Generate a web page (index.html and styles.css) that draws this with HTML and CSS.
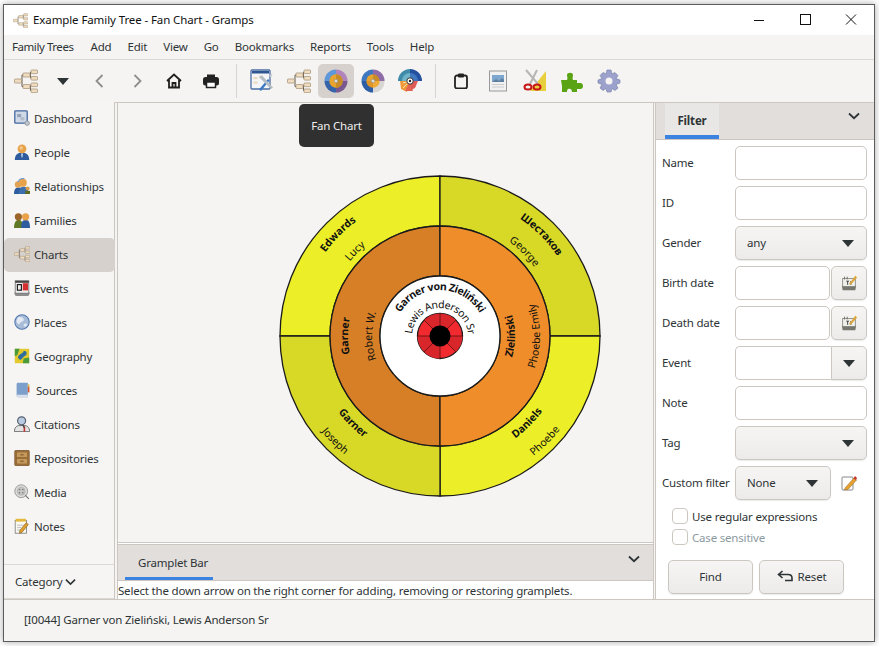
FILE: index.html
```html
<!DOCTYPE html>
<html lang="en">
<head>
<meta charset="utf-8">
<title>Example Family Tree - Fan Chart - Gramps</title>
<link rel="stylesheet" href="styles.css">
</head>
<body>
<svg class="defs" width="0" height="0" aria-hidden="true">
  <defs>
    <symbol id="tree" viewBox="0 0 24 24">
      <path d="M7 12H8M8 6V17.500M8 6H9M8 17.500H9M16 6H16.500M16 17.500H16.500M16.500 2.800V9.300M16.500 15.800V21.800" fill="none" stroke="#5f584e" stroke-width="1"/>
      <g fill="#f0dcbe" stroke="#a9987e" stroke-width=".8">
        <rect x=".5" y="10" width="7" height="4" rx=".6"/>
        <rect x="9" y="4" width="7" height="4" rx=".6"/>
        <rect x="9" y="15.500" width="7" height="4" rx=".6"/>
        <rect x="17" y="1" width="6.500" height="3.600" rx=".6"/>
        <rect x="17" y="7.500" width="6.500" height="3.600" rx=".6"/>
        <rect x="17" y="14" width="6.500" height="3.600" rx=".6"/>
        <rect x="17" y="20" width="6.500" height="3.600" rx=".6"/>
      </g>
    </symbol>
    <symbol id="fan1" viewBox="0 0 24 24">
      <path d="M12 12V.5A11.500 11.500 0 0 0 .5 12Z" fill="#5f98d8"/>
      <path d="M12 12V.5A11.500 11.500 0 0 1 23.500 12Z" fill="#b085bd"/>
      <path d="M12 12H23.500A11.500 11.500 0 0 1 12 23.500Z" fill="#78588f"/>
      <path d="M12 12V23.500A11.500 11.500 0 0 1 .5 12Z" fill="#3564aa"/>
      <circle cx="12" cy="12" r="6.700" fill="#e8a42d"/>
      <path d="M12 5.300A6.700 6.700 0 0 1 12 18.700Z" fill="#c98c27"/>
      <circle cx="12" cy="12" r="1.800" fill="#dcdcdc" stroke="#888" stroke-width=".5"/>
    </symbol>
    <symbol id="fan2" viewBox="0 0 24 24">
      <circle cx="13" cy="13" r="10.500" fill="#d8d6d3"/>
      <path d="M12 12V.5A11.500 11.500 0 0 0 .5 12Z" fill="#3f78c0"/>
      <path d="M12 12V.5A11.500 11.500 0 0 1 23.500 12Z" fill="#8f6ba8"/>
      <path d="M12 12V23.500A11.500 11.500 0 0 1 .5 12Z" fill="#2e5ea6"/>
      <path d="M12 12V5.300A6.700 6.700 0 0 0 5.300 12Z" fill="#e8a42d"/>
      <path d="M12 12V5.300A6.700 6.700 0 0 1 18.700 12Z" fill="#c98c27"/>
      <path d="M12 12H5.300A6.700 6.700 0 0 0 12 18.700Z" fill="#dc9526"/>
      <path d="M12 12V18.700A6.700 6.700 0 0 0 18.700 12Z" fill="#f0ac36"/>
      <circle cx="12" cy="12" r="1.800" fill="#dcdcdc" stroke="#888" stroke-width=".5"/>
    </symbol>
    <symbol id="fan3" viewBox="0 0 24 24">
      <path d="M0 12A12 12 0 0 1 12 0V12Z" fill="#3f8aa8"/>
      <path d="M12 0A12 12 0 0 1 24 12H12Z" fill="#23509f"/>
      <path d="M4 12A8 8 0 0 1 12 4V12Z" fill="#6db4c8"/>
      <path d="M12 4A8 8 0 0 1 20 12H12Z" fill="#3f78c0"/>
      <path d="M12 12L2 12L3 20L9 23Z" fill="#ee9a3a"/>
      <path d="M12 12L7 22L15 22Z" fill="#e4654f"/>
      <path d="M12 12H20L17 19L13 21Z" fill="#dd5c55"/>
      <path d="M12 12L5 14M12 12L5 19" stroke="#fbe3a6" stroke-width="1"/>
      <circle cx="12" cy="12" r="3.200" fill="#fff" stroke="#333" stroke-width="1"/>
      <circle cx="12" cy="12" r="1.200" fill="#222"/>
    </symbol>
    <symbol id="editor" viewBox="0 0 24 24">
      <rect x="1" y="1" width="19" height="19" rx="1" fill="#f3f5f8" stroke="#4b6da3" stroke-width="1.300"/>
      <rect x="2" y="2" width="17" height="2.500" fill="#2e558f"/>
      <rect x="3.500" y="8" width="4" height="2.200" fill="#ecd9bf"/>
      <rect x="3.500" y="12.500" width="4" height="2.200" fill="#ecd9bf"/>
      <rect x="9" y="6.500" width="4" height="2.200" fill="#ecd9bf"/>
      <path d="M9 20.500L18 10L19.500 11.500L11 22Z" fill="#3a78c2"/>
      <path d="M9 8L21 20L23 18.500L12 6.500Z" fill="#b4bcc4"/>
      <path d="M19 6L22.500 4.500L21 9Z" fill="#c4ccd4"/>
    </symbol>
    <symbol id="dash" viewBox="0 0 20 20">
      <rect x="1" y="1" width="15.500" height="15.500" rx="1" fill="#cfd9e8" stroke="#41689f" stroke-width="1.600"/>
      <rect x="4" y="5" width="5" height="4" fill="#96a3b6"/>
      <rect x="8" y="9" width="5" height="4" fill="#b3bdca"/>
      <circle cx="16.500" cy="16.500" r="2.800" fill="#c0c6cc" stroke="#8b939c" stroke-width="1"/>
    </symbol>
    <symbol id="person" viewBox="0 0 20 20">
      <path d="M1 20C1 13 5 11 10 11S19 13 19 20Z" fill="#2f5c9e"/>
      <path d="M9 12H11L10.500 17H9.500Z" fill="#e7eef6"/>
      <circle cx="10" cy="6" r="5.500" fill="#e8a24a"/>
      <circle cx="9" cy="5" r="2.200" fill="#f3c68a"/>
    </symbol>
    <symbol id="rel" viewBox="0 0 20 20">
      <path d="M0 20C0 14 2 12 6 12S11 14 11 20Z" fill="#2f5c9e"/>
      <circle cx="5" cy="8" r="4" fill="#e2a352"/>
      <path d="M6 20C6 13 9 11 12 11S18 13 18 20Z" fill="#3d6eae"/>
      <circle cx="11" cy="6" r="5" fill="#e8a24a"/>
      <path d="M14 16H20V20H14Z" fill="#5c6a23"/>
      <circle cx="17" cy="13" r="2.500" fill="#d39a4d"/>
      <path d="M5 5A7 7 0 0 1 13 .8" fill="none" stroke="#6b9ad6" stroke-width="1.400"/>
    </symbol>
    <symbol id="family" viewBox="0 0 20 20">
      <path d="M0 20C0 12 3 10 6 10S11 12 11 20Z" fill="#5e7a26"/>
      <circle cx="5.500" cy="6" r="4.500" fill="#9c6428"/>
      <path d="M9 20C9 12 11 10 14.500 10S20 12 20 20Z" fill="#2f5c9e"/>
      <circle cx="14.500" cy="6" r="4.500" fill="#e8a24a"/>
    </symbol>
    <symbol id="cal" viewBox="0 0 20 20">
      <path d="M0 16H20L18 20H2Z" fill="#8e8e8e"/>
      <rect x="1.500" y="1" width="17" height="15.500" fill="#efefef" stroke="#6d6d6d" stroke-width="1"/>
      <rect x="1.500" y="1" width="17" height="2.500" fill="#444"/>
      <rect x="11" y="4" width="6.500" height="9" fill="#d43030"/>
      <rect x="3.500" y="5" width="6.500" height="8.500" fill="#222"/>
      <rect x="5" y="6.500" width="3.500" height="5.500" fill="#eee"/>
    </symbol>
    <symbol id="globe" viewBox="0 0 20 20">
      <circle cx="10" cy="10" r="9" fill="#a8bcd8" stroke="#5078b0" stroke-width="1.300"/>
      <path d="M5 4C9 3 13 5 12 8C11 10 8 9 7 12C6 14 4 11 3 9Z" fill="#e4eaf3"/>
      <path d="M12 13C14 11 17 12 16 14C15 16 12 17 12 13Z" fill="#e4eaf3"/>
    </symbol>
    <symbol id="map" viewBox="0 0 20 20">
      <rect x="1" y="1" width="18" height="18" fill="#e2c92e"/>
      <path d="M1 1H7L4 9L1 10ZM12 13L19 12V19H11Z" fill="#4a9a3c"/>
      <path d="M5 11C8 6 10 8 12 4C15 3 17 6 15 9C12 10 11 13 8 15C6 14 5 13 5 11Z" fill="#2f6f9f"/>
    </symbol>
    <symbol id="book" viewBox="0 0 20 20">
      <path d="M2 3C2 1.500 3 1 4 1H16V19H4C3 19 2 18.500 2 17Z" fill="#7c9fcc"/>
      <path d="M2 17C2 16 3 16 4 16H16V19H4C3 19 2 18.500 2 17Z" fill="#d9dfe8"/>
      <rect x="16" y="6" width="2" height="7" fill="#d6502e"/>
      <rect x="16" y="3" width="2" height="3.500" fill="#d8b33c"/>
    </symbol>
    <symbol id="cite" viewBox="0 0 20 20">
      <path d="M.5 19.500C.5 14 4 12 6 12L14 12C16 12 19.500 14 19.500 19.500Z" fill="#e4e4e4" stroke="#555" stroke-width="1"/>
      <path d="M13 13V19.500" stroke="#c83030" stroke-width="2"/>
      <circle cx="9.500" cy="6" r="5" fill="#b9cbe2" stroke="#55606e" stroke-width="1.500"/>
      <path d="M11 11L13 15" stroke="#444" stroke-width="1.500"/>
    </symbol>
    <symbol id="repo" viewBox="0 0 20 20">
      <rect x="1" y=".5" width="18" height="19" rx="1" fill="#a8763c" stroke="#6d4a22" stroke-width="1"/>
      <rect x="3" y="2.500" width="14" height="7" fill="#c7985c" stroke="#7d5728" stroke-width=".7"/>
      <rect x="3" y="10.500" width="14" height="7" fill="#c7985c" stroke="#7d5728" stroke-width=".7"/>
      <path d="M8 6H12M8 14H12" stroke="#5c3e1a" stroke-width="1"/>
    </symbol>
    <symbol id="media" viewBox="0 0 20 20">
      <circle cx="9" cy="9" r="8" fill="#dcdcda" stroke="#8a8a88" stroke-width="1"/>
      <circle cx="9" cy="9" r="5" fill="#c6c6c3" stroke="#9c9c9a" stroke-width=".6"/>
      <g fill="#777"><circle cx="7" cy="7" r="1"/><circle cx="11" cy="7" r="1"/><circle cx="7" cy="11" r="1"/><circle cx="11" cy="11" r="1"/></g>
      <path d="M14 14L18.500 18.500" stroke="#777" stroke-width="1.500"/>
    </symbol>
    <symbol id="note" viewBox="0 0 20 20">
      <rect x="1.500" y="3" width="14" height="16" fill="#fbfaf2" stroke="#777" stroke-width="1"/>
      <path d="M2 1H15V4.500H2Z" fill="#e3ba3e"/>
      <path d="M4 9H12M4 12H9M4 15H8" stroke="#aaa" stroke-width="1"/>
      <path d="M7 16L15 6L18 8L10 18L7 19Z" fill="#e0a030" stroke="#7d5b1f" stroke-width=".7"/>
    </symbol>
    <symbol id="datepick" viewBox="0 0 20 20">
      <path d="M2 13H18L17 18H3Z" fill="#77776f"/>
      <rect x="3" y="5" width="14" height="9" fill="#eeeeea" stroke="#77776f" stroke-width=".8"/>
      <path d="M5 3V6M8 3V6" stroke="#666" stroke-width="1"/>
      <path d="M7 8H10M8.500 8V12M12 8V12" stroke="#333" stroke-width="1"/>
      <path d="M10 11L17 2L19 4L12 12Z" fill="#dda53a"/>
    </symbol>
    <symbol id="caret" viewBox="0 0 12 7"><path d="M0 0H12L6 7Z" fill="#2e3436"/></symbol>
    <symbol id="chev" viewBox="0 0 12 8"><path d="M1 1.500L6 6.200L11 1.500" fill="none" stroke="#2e3436" stroke-width="1.800"/></symbol>
  </defs>
</svg>

<div class="window">
  <header class="titlebar">
    <svg class="title-icon"><use href="#tree"/></svg>
    <span class="title-text">Example Family Tree - Fan Chart - Gramps</span>
    <div class="wincontrols">
      <svg class="winbtn" viewBox="0 0 12 12"><path d="M1 6.500H11" stroke="#111" stroke-width="1"/></svg>
      <svg class="winbtn" viewBox="0 0 12 12"><rect x="1.500" y=".5" width="10" height="10" fill="none" stroke="#111"/></svg>
      <svg class="winbtn" viewBox="0 0 12 12"><path d="M1 .5L11 10.500M11 .5L1 10.500" stroke="#111" stroke-width="1"/></svg>
    </div>
  </header>

  <nav class="menubar">
    <span class="first">Family Trees</span><span>Add</span><span>Edit</span><span>View</span><span>Go</span><span>Bookmarks</span><span>Reports</span><span>Tools</span><span>Help</span>
  </nav>

  <div class="toolbar">
    <span class="tool"><svg class="ti24"><use href="#tree"/></svg></span>
    <span class="tool"><svg class="ti-caret"><use href="#caret"/></svg></span>
    <span class="tool"><svg class="ti16" viewBox="0 0 16 16"><path d="M10.500 2L4.500 8L10.500 14" fill="none" stroke="#8e8e8c" stroke-width="1.800"/></svg></span>
    <span class="tool"><svg class="ti16" viewBox="0 0 16 16"><path d="M5.500 2L11.500 8L5.500 14" fill="none" stroke="#8e8e8c" stroke-width="1.800"/></svg></span>
    <span class="tool"><svg class="ti16" viewBox="0 0 16 16"><path d="M1 8L8 1.500L15 8M3 7V14.500H13V7M6.500 14.500V10H9.500V14.500" fill="none" stroke="#1f1f1f" stroke-width="1.800"/></svg></span>
    <span class="tool"><svg class="ti16" viewBox="0 0 16 16"><path d="M4 1.500H12V5H4Z" fill="#222"/><rect x="0" y="4" width="16" height="8.500" rx="2.500" fill="#222"/><rect x="3.500" y="9" width="9" height="5.500" fill="#fff" stroke="#222" stroke-width="1.500"/></svg></span>
    <span class="tsep"></span>
    <span class="tool"><svg class="ti24"><use href="#editor"/></svg></span>
    <span class="tool"><svg class="ti24"><use href="#tree"/></svg></span>
    <span class="tool selected"><svg class="ti24"><use href="#fan1"/></svg></span>
    <span class="tool"><svg class="ti24"><use href="#fan2"/></svg></span>
    <span class="tool"><svg class="ti24"><use href="#fan3"/></svg></span>
    <span class="tsep"></span>
    <span class="tool"><svg class="ti16" viewBox="0 0 16 16"><rect x="2" y="2.500" width="12" height="13" rx="2" fill="none" stroke="#222" stroke-width="1.800"/><rect x="5" y=".5" width="6" height="4" rx="1" fill="#222"/></svg></span>
    <span class="tool"><svg class="ti24" viewBox="0 0 24 24"><rect x="3.500" y="2" width="17" height="20" fill="#f1f1f1" stroke="#999"/><rect x="6" y="6" width="12" height="7" fill="#7ea7cf"/><path d="M6 13L10 10L13 12L16 9L18 11V13Z" fill="#5d7f9f"/><path d="M6 15.500H18M6 18H18" stroke="#ccc"/></svg></span>
    <span class="tool"><svg class="ti24" viewBox="0 0 24 24"><path d="M23 2V22H7Z" fill="#e8cf3d"/><path d="M3 1L15 15M14 1L7 15" stroke="#b5b5b5" stroke-width="2"/><ellipse cx="5" cy="18" rx="3.500" ry="2.500" fill="none" stroke="#c71818" stroke-width="2"/><ellipse cx="14" cy="18" rx="3.500" ry="2.500" fill="none" stroke="#c71818" stroke-width="2"/></svg></span>
    <span class="tool"><svg class="ti24" viewBox="0 0 24 24"><path d="M1 11H7C8 9 7 8 7 6C7 3 13 3 13 6C13 8 12 9 13 11H17V14C19 14 23 13 23 17C23 21 19 20 17 20V23H12C12 20 10 19 8 20C7 21 7 22 7 23H2V17Z" fill="#5aa315"/></svg></span>
    <span class="tool"><svg class="ti24" viewBox="0 0 24 24"><path d="M10 1H14L15 5L18 3.500L21 6.500L19 9.500L23 11V14L19 15.500L21 19L18 21.500L15 19.500L14 23H10L9 19.500L6 21.500L3 19L5 15.500L1 14V11L5 9.500L3 6.500L6 3.500L9 5Z" fill="#9ca2cb" stroke="#6e7aa6" stroke-width=".6"/><circle cx="12" cy="12" r="3.500" fill="#f5f4f2"/></svg></span>
  </div>

  <div class="content">
    <aside class="sidebar">
      <ul class="navlist">
        <li><svg class="ni"><use href="#dash"/></svg>Dashboard</li>
        <li><svg class="ni"><use href="#person"/></svg>People</li>
        <li><svg class="ni"><use href="#rel"/></svg>Relationships</li>
        <li><svg class="ni"><use href="#family"/></svg>Families</li>
        <li class="active"><svg class="ni"><use href="#tree"/></svg>Charts</li>
        <li><svg class="ni"><use href="#cal"/></svg>Events</li>
        <li><svg class="ni"><use href="#globe"/></svg>Places</li>
        <li><svg class="ni"><use href="#map"/></svg>Geography</li>
        <li><svg class="ni ni-wide"><use href="#book"/></svg>Sources</li>
        <li><svg class="ni"><use href="#cite"/></svg>Citations</li>
        <li><svg class="ni"><use href="#repo"/></svg>Repositories</li>
        <li><svg class="ni"><use href="#media"/></svg>Media</li>
        <li><svg class="ni"><use href="#note"/></svg>Notes</li>
      </ul>
      <div class="category">Category<svg class="chev-sm"><use href="#chev"/></svg></div>
    </aside>
    <div class="handle"></div>

    <main class="center">
      <div class="tooltip">Fan Chart</div>
      <div class="canvas">
        <svg class="chart" viewBox="-161 -161 322 322">
          <defs>
            <path id="nw142" d="M-142 0A142 142 0 0 1 0-142"/>
            <path id="nw117" d="M-117 0A117 117 0 0 1 0-117"/>
            <path id="ne142" d="M0-142A142 142 0 0 1 142 0"/>
            <path id="ne117" d="M0-117A117 117 0 0 1 117 0"/>
            <path id="sw127" d="M-127 0A127 127 0 0 0 0 127"/>
            <path id="sw152" d="M-152 0A152 152 0 0 0 0 152"/>
            <path id="se127" d="M0 127A127 127 0 0 0 127 0"/>
            <path id="se152" d="M0 152A152 152 0 0 0 152 0"/>
            <path id="l92" d="M0 92A92 92 0 0 1 0-92"/>
            <path id="l68" d="M0 68A68 68 0 0 1 0-68"/>
            <path id="r75" d="M0 75A75 75 0 0 0 0-75"/>
            <path id="r100" d="M0 100A100 100 0 0 0 0-100"/>
            <path id="c46" d="M-46 0A46 46 0 0 1 46 0"/>
            <path id="c28" d="M0 28A28 28 0 0 1 0-28A28 28 0 0 1 0 28"/>
          </defs>
          <g class="seg">
            <path fill="#ecee28" d="M-160 0A160 160 0 0 1 0-160V-110A110 110 0 0 0-110 0Z"/>
            <path fill="#d8d827" d="M0-160A160 160 0 0 1 160 0H110A110 110 0 0 0 0-110Z"/>
            <path fill="#ecee28" d="M160 0A160 160 0 0 1 0 160V110A110 110 0 0 0 110 0Z"/>
            <path fill="#d8d827" d="M0 160A160 160 0 0 1-160 0H-110A110 110 0 0 0 0 110Z"/>
            <path fill="#d77f26" d="M0-110A110 110 0 0 0 0 110V60A60 60 0 0 1 0-60Z"/>
            <path fill="#ef8d2a" d="M0-110A110 110 0 0 1 0 110V60A60 60 0 0 0 0-60Z"/>
            <circle r="60" fill="#fff"/>
            <circle r="22.500" fill="#f02a2e"/>
          </g>
          <g class="dark-wedges">
            <path d="M0 0V-22.500A22.500 22.500 0 0 1 15.900-15.900Z"/>
            <path d="M0 0V-22.500A22.500 22.500 0 0 0-15.900-15.900Z"/>
            <path d="M0 0H22.500A22.500 22.500 0 0 1 15.900 15.900Z"/>
            <path d="M0 0H-22.500A22.500 22.500 0 0 0-15.900 15.900Z"/>
            <path d="M0 0V22.500A22.500 22.500 0 0 1-15.900 15.900Z"/>
          </g>
          <path class="spokes" d="M0-22.500V22.500M-22.500 0H22.500M-15.900-15.900L15.900 15.900M15.900-15.900L-15.900 15.900"/>
          <circle r="10.500" fill="#000"/>
          <text class="sn"><textPath href="#nw142" startOffset="50%">Edwards</textPath></text>
          <text class="gn"><textPath href="#nw117" startOffset="50%">Lucy</textPath></text>
          <text class="sn"><textPath href="#ne142" startOffset="50%">Шестаков</textPath></text>
          <text class="gn"><textPath href="#ne117" startOffset="50%">George</textPath></text>
          <text class="sn"><textPath href="#sw127" startOffset="50%">Garner</textPath></text>
          <text class="gn"><textPath href="#sw152" startOffset="50%">Joseph</textPath></text>
          <text class="sn"><textPath href="#se127" startOffset="50%">Daniels</textPath></text>
          <text class="gn"><textPath href="#se152" startOffset="50%">Phoebe</textPath></text>
          <text class="sn"><textPath href="#l92" startOffset="50%">Garner</textPath></text>
          <text class="gn"><textPath href="#l68" startOffset="50%">Robert W.</textPath></text>
          <text class="sn"><textPath href="#r75" startOffset="50%">Zieliński</textPath></text>
          <text class="gn"><textPath href="#r100" startOffset="50%">Phoebe Emily</textPath></text>
          <text class="sn tight"><textPath href="#c46" startOffset="50%">Garner von Zieliński</textPath></text>
          <text class="gn tight"><textPath href="#c28" startOffset="50%">Lewis Anderson Sr</textPath></text>
        </svg>
      </div>
      <section class="gramplets">
        <div class="tabbar tabbar-low">
          <span class="gtab">Gramplet Bar</span>
          <svg class="chev"><use href="#chev"/></svg>
        </div>
        <div class="ghint">Select the down arrow on the right corner for adding, removing or restoring gramplets.</div>
      </section>
    </main>
    <div class="handle handle-r"></div>

    <aside class="filter">
      <div class="tabbar tabbar-filter">
        <span class="ftab">Filter</span>
        <svg class="chev chev-f"><use href="#chev"/></svg>
      </div>
      <div class="fields">
        <label>Name</label><div class="input"></div>
        <label>ID</label><div class="input"></div>
        <label>Gender</label><div class="combo"><span>any</span><svg class="caret"><use href="#caret"/></svg></div>
        <label>Birth date</label><div class="pair"><div class="input"></div><div class="sqbtn"><svg class="dp"><use href="#datepick"/></svg></div></div>
        <label>Death date</label><div class="pair"><div class="input"></div><div class="sqbtn"><svg class="dp"><use href="#datepick"/></svg></div></div>
        <label>Event</label><div class="joined"><div class="input"></div><div class="sqbtn"><svg class="caret"><use href="#caret"/></svg></div></div>
        <label>Note</label><div class="input"></div>
        <label>Tag</label><div class="combo"><span></span><svg class="caret"><use href="#caret"/></svg></div>
        <label>Custom filter</label>
        <div class="pair pair-custom">
          <div class="combo"><span>None</span><svg class="caret"><use href="#caret"/></svg></div>
          <svg class="editicon" viewBox="0 0 16 16"><rect x="1" y="2" width="11" height="13" rx="1" fill="#fff" stroke="#888"/><path d="M4 13L13 3L15.500 5L7 14.500L3.500 15Z" fill="#e8a030" stroke="#8a6420" stroke-width=".5"/><path d="M12.500 3.500L14 1L16 3L15 5Z" fill="#c83228"/></svg>
        </div>
      </div>
      <div class="checks">
        <div class="check"><span class="box"></span>Use regular expressions</div>
        <div class="check disabled"><span class="box"></span>Case sensitive</div>
      </div>
      <div class="actions">
        <div class="btn">Find</div>
        <div class="btn"><svg class="undo" viewBox="0 0 16 12"><path d="M5.500 1L1.500 4.500L5.500 8M2 4.500H11C13.500 4.500 15 6 15 8V10.500H8" fill="none" stroke="#2e3436" stroke-width="1.600"/></svg>Reset</div>
      </div>
    </aside>
  </div>

  <footer class="status">[I0044] Garner von Zieliński, Lewis Anderson Sr</footer>
</div>
</body>
</html>
```

FILE: styles.css
```css
* { box-sizing: border-box; }
html, body { margin: 0; height: 100%; }
body {
  background: #fff;
  font-family: "Noto Sans", "Open Sans", sans-serif;
  font-size: 11.5px;
  letter-spacing: -.19px;
  color: #2e3436;
  overflow: hidden;
}
.defs { position: absolute; }
.window {
  width: 872px;
  height: 638px;
  margin: 4px 0 0 3px;
  border: 1px solid #5c5c5c;
  background: #f5f4f2;
  box-shadow: 0 0 7px rgba(0, 0, 0, .35);
  display: flex;
  flex-direction: column;
}

.titlebar {
  height: 30px;
  background: #fff;
  display: flex;
  align-items: center;
  padding-left: 9px;
  color: #111;
}
.title-icon { width: 15px; height: 15px; margin-right: 5px; }
.title-text { flex: 1; letter-spacing: -.1px; padding-bottom: 2px; }
.wincontrols { display: flex; align-items: center; gap: 34px; padding-right: 17px; margin-top: -1px; }
.winbtn { width: 12px; height: 12px; }

.menubar {
  height: 25px;
  display: flex;
  align-items: center;
  gap: 16px;
  padding: 0 0 1px 8px;
  border-bottom: 1px solid #dcd8d3;
}
.menubar .first { letter-spacing: -.44px; margin-right: 1px; }

.toolbar {
  height: 43px;
  display: flex;
  align-items: center;
  padding-left: 3px;
  border-bottom: 1px solid #cdc7c2;
}
.tool {
  width: 37px;
  height: 34px;
  display: flex;
  align-items: center;
  justify-content: center;
  border-radius: 5px;
  flex: none;
}
.tool.selected { background: #d6d1cd; width: 36px; margin: 0 .5px; }
.tsep { width: 1px; height: 34px; background: #d8d4d0; margin: 0 6px 0 7px; flex: none; }
.ti24 { width: 24px; height: 24px; }
.ti16 { width: 16px; height: 16px; }
.ti-caret { width: 12px; height: 7px; }

.content { flex: 1; display: flex; min-height: 0; }

.sidebar {
  width: 110px;
  margin-top: -1px;
  position: relative;
  display: flex;
  flex-direction: column;
  background: #f6f5f3;
}
.navlist { list-style: none; margin: 0; padding: 0; flex: 1; }
.navlist li {
  height: 34px;
  display: flex;
  align-items: center;
  gap: 4px;
  padding: 0 0 2px 10px;
}
.navlist li.active { background: #d6d1cd; border-radius: 5px; width: 111px; }
.ni { width: 16px; height: 16px; flex: none; }
.ni-wide { width: 18px; }
.category {
  height: 35px;
  border-top: 1px solid #dcd8d3;
  border-bottom: 1px solid #dcd8d3;
  display: flex;
  align-items: center;
  gap: 3px;
  padding-left: 11px;
}
.chev-sm { width: 11px; height: 8px; }

.handle {
  width: 4px;
  flex: none;
  border-left: 1px solid #cdc7c2;
  border-right: 1px solid #cdc7c2;
}
.handle-r { width: 3px; }

.center { width: 535px; flex: none; display: flex; flex-direction: column; position: relative; }
.canvas { flex: 1; min-height: 0; border-bottom: 1px solid #cdc7c2; }
.chart { display: block; width: 322px; height: 322px; margin: 72px 0 0 161px; }
.seg path, .seg circle { stroke: #1a1a1a; stroke-width: 1.300; }
.dark-wedges path { fill: #d8262b; }
.spokes { stroke: #5a1010; stroke-width: .8; fill: none; }
.chart text { font-family: "Noto Sans", "Open Sans", sans-serif; text-anchor: middle; fill: #111; letter-spacing: 0; }
.chart .sn { font-size: 10.500px; font-weight: 700; }
.chart .gn { font-size: 10.500px; }
.chart .sn.tight { letter-spacing: -.45px; }
.chart .gn.tight { letter-spacing: -.4px; }

.tooltip {
  position: absolute;
  left: 181px;
  top: 1px;
  width: 75px;
  height: 43px;
  background: #303030;
  color: #eee;
  border-radius: 5px;
  display: flex;
  align-items: center;
  justify-content: center;
}

.gramplets { background: #fff; }
.tabbar { display: flex; background: #e1dedb; border-bottom: 1px solid #cdc7c2; position: relative; }
.tabbar-low { height: 37px; margin-top: 1px; border-top: 1px solid #cdc7c2; padding-left: 7px; }
.gtab {
  width: 88px;
  padding: 10px 0 0 13px;
  border-bottom: 3px solid #3a83e0;
}
.chev { position: absolute; right: 13px; top: 10px; width: 12px; height: 8px; }
.ghint { height: 18px; line-height: 19px; background: #fff; white-space: nowrap; overflow: hidden; }

.filter { flex: 1; background: #fff; display: flex; flex-direction: column; }
.tabbar-filter { height: 37px; padding-left: 9px; }
.ftab {
  width: 54px;
  background: #e8e7e5;
  border-bottom: 4px solid #3a83e0;
  font-weight: 700;
  text-align: center;
  padding-top: 10px;
}
.chev-f { right: 14px; top: 9px; }
.fields {
  display: grid;
  grid-template-columns: 73px 132px;
  grid-auto-rows: 34px;
  row-gap: 6px;
  padding: 6px 0 0 6px;
  align-items: center;
}
.fields label { padding-bottom: 2px; white-space: nowrap; }
.input { background: #fff; border: 1px solid #cdc7c2; border-radius: 5px; height: 34px; min-width: 0; }
.combo {
  height: 34px;
  border: 1px solid #cdc7c2;
  border-radius: 5px;
  background: linear-gradient(#f6f5f4, #edebe9);
  box-shadow: 0 1px 1px rgba(0, 0, 0, .08);
  display: flex;
  align-items: center;
  justify-content: space-between;
  padding: 0 12px 0 11px;
}
.combo span { padding-bottom: 2px; }
.caret { width: 12px; height: 7px; }
.pair { display: flex; height: 34px; gap: 1px; align-items: center; }
.pair .input { width: 95px; }
.sqbtn {
  width: 36px;
  height: 34px;
  border: 1px solid #cdc7c2;
  border-radius: 5px;
  background: linear-gradient(#f6f5f4, #edebe9);
  box-shadow: 0 1px 1px rgba(0, 0, 0, .08);
  display: flex;
  align-items: center;
  justify-content: center;
}
.dp { width: 18px; height: 18px; }
.joined { display: flex; height: 34px; }
.joined .input { width: 96px; border-radius: 5px 0 0 5px; border-right: 0; }
.joined .sqbtn { border-radius: 0 5px 5px 0; }
.pair-custom { gap: 10px; }
.pair-custom .combo { width: 96px; flex: none; }
.editicon { width: 16px; height: 16px; }

.checks { padding: 8px 0 0 16px; display: flex; flex-direction: column; gap: 5px; }
.check { height: 16px; display: flex; align-items: center; gap: 4px; }
.check.disabled { color: #8a9aa0; }
.box { width: 16px; height: 16px; border: 1px solid #cdc7c2; border-radius: 4px; background: #fff; flex: none; }

.actions { display: flex; gap: 6px; padding: 15px 0 0 12px; }
.btn {
  width: 85px;
  height: 34px;
  border: 1px solid #cdc7c2;
  border-radius: 5px;
  background: linear-gradient(#f6f5f4, #edebe9);
  box-shadow: 0 1px 1px rgba(0, 0, 0, .08);
  display: flex;
  align-items: center;
  justify-content: center;
  gap: 5px;
  padding-bottom: 2px;
}
.undo { width: 16px; height: 12px; }

.status {
  height: 42px;
  border-top: 1px solid #cdc7c2;
  display: flex;
  align-items: center;
  padding: 0 0 2px 20px;
}
```
